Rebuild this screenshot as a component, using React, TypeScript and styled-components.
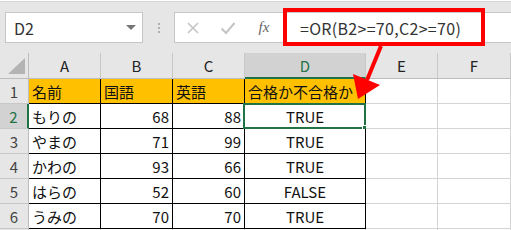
import React from 'react';
import styled, { createGlobalStyle, css } from 'styled-components';

const GlobalStyle = createGlobalStyle`
    body {
        margin: 0;
        background: #ffffff;
        font-family: 'Noto Sans CJK JP', 'Noto Sans', sans-serif;
    }
`;

const SPage = styled.div`
    position: relative;
    width: 511px;
    height: 230px;
    overflow: hidden;
    background: #ffffff;
`;

const SToolbar = styled.div`
    height: 52px;
    box-sizing: border-box;
    border-top: 1px solid #d4d4d4;
    margin-top: 1px;
    background: #e6e6e6;
    display: flex;
    align-items: flex-start;
    padding-top: 10px;
    padding-left: 5px;
`;

const SNameBox = styled.div`
    width: 138px;
    height: 31px;
    box-sizing: border-box;
    border: 1px solid #c6c6c6;
    background: #ffffff;
    display: flex;
    align-items: center;
    justify-content: space-between;
    padding: 0 6px 0 8px;
    font-size: 16px;
    color: #333333;
`;

const SDropArrow = styled.span`
    width: 0;
    height: 0;
    border-left: 5px solid transparent;
    border-right: 5px solid transparent;
    border-top: 5px solid #777777;
`;

const SDots = styled.div`
    width: 31px;
    height: 31px;
    display: flex;
    flex-direction: column;
    align-items: center;
    justify-content: center;
    gap: 2px;

    > span {
        width: 2px;
        height: 2px;
        background: #b0b0b0;
    }
`;

const SFormulaBox = styled.div`
    flex: 1;
    height: 31px;
    box-sizing: border-box;
    border: 1px solid #c6c6c6;
    border-right: none;
    background: #ffffff;
    display: flex;
    align-items: center;
`;

const SIconButton = styled.div`
    width: 35px;
    height: 29px;
    display: flex;
    align-items: center;
    justify-content: center;
`;

const SFx = styled.span`
    width: 38px;
    text-align: center;
    font-family: 'Liberation Serif', serif;
    font-style: italic;
    font-size: 15px;
    color: #666666;
`;

const SFormulaText = styled.span`
    margin-left: 17px;
    font-size: 16px;
    color: #333333;
    letter-spacing: 0.3px;
`;

const SGrid = styled.div`
    display: grid;
    grid-template-columns: 29px 72px 72px 72px 121px 72px 1fr;
    grid-template-rows: 26px repeat(7, 25px);
`;

const SCorner = styled.div`
    position: relative;
    background: #e6e6e6;
    border-right: 1px solid #bdbdbd;
    border-bottom: 1px solid #bdbdbd;

    &::after {
        content: '';
        position: absolute;
        right: 3px;
        bottom: 4px;
        width: 0;
        height: 0;
        border-left: 17px solid transparent;
        border-bottom: 16px solid #b4b4b4;
    }
`;

const SColHead = styled.div<{ $active?: boolean }>`
    background: #e6e6e6;
    border-right: 1px solid #c8c8c8;
    border-bottom: 1px solid #bdbdbd;
    box-sizing: border-box;
    display: flex;
    align-items: center;
    justify-content: center;
    font-size: 15px;
    color: #222222;
    ${({ $active }) =>
        $active &&
        css`
            background: #d2d2d2;
            color: #217346;
            border-bottom: 2px solid #217346;
        `}
`;

const SRowHead = styled.div<{ $active?: boolean }>`
    background: #e6e6e6;
    border-right: 1px solid #bdbdbd;
    border-bottom: 1px solid #c8c8c8;
    box-sizing: border-box;
    display: flex;
    align-items: center;
    justify-content: center;
    font-size: 15px;
    color: #444444;
    ${({ $active }) =>
        $active &&
        css`
            background: #d2d2d2;
            color: #217346;
            border-right: 2px solid #217346;
        `}
`;

const SCell = styled.div<{
    $align?: 'left' | 'right' | 'center';
    $head?: boolean;
    $boxed?: boolean;
    $selected?: boolean;
}>`
    position: relative;
    box-sizing: border-box;
    border-right: 1px solid #d4d4d4;
    border-bottom: 1px solid #d4d4d4;
    display: flex;
    align-items: center;
    padding: 0 3px;
    font-size: 15px;
    color: #111111;
    white-space: nowrap;
    justify-content: ${({ $align }) =>
        $align === 'right' ? 'flex-end' : $align === 'center' ? 'center' : 'flex-start'};
    background: ${({ $head }) => ($head ? '#ffc000' : '#ffffff')};
    ${({ $boxed }) =>
        $boxed &&
        css`
            border-right-color: #000000;
            border-bottom-color: #000000;
        `}
    ${({ $selected }) =>
        $selected &&
        css`
            &::before {
                content: '';
                position: absolute;
                left: -2px;
                top: -1px;
                right: -1px;
                bottom: -1px;
                border: 2px solid #217346;
                pointer-events: none;
            }
            &::after {
                content: '';
                position: absolute;
                right: -4px;
                bottom: -4px;
                width: 5px;
                height: 5px;
                background: #217346;
                border: 1px solid #ffffff;
            }
        `}
`;

const SHighlight = styled.div`
    position: absolute;
    left: 283px;
    top: 8px;
    width: 202px;
    height: 38px;
    box-sizing: border-box;
    border: 4px solid #ff0000;
    pointer-events: none;
`;

const SArrow = styled.svg`
    position: absolute;
    left: 0;
    top: 0;
    pointer-events: none;
`;

const columns = ['A', 'B', 'C', 'D', 'E', 'F'];

const rows: [string, string, string, string][] = [
    ['もりの', '68', '88', 'TRUE'],
    ['やまの', '71', '99', 'TRUE'],
    ['かわの', '93', '66', 'TRUE'],
    ['はらの', '52', '60', 'FALSE'],
    ['うみの', '70', '70', 'TRUE'],
];

const headers = ['名前', '国語', '英語', '合格か不合格か'];

export default function App() {
    return (
        <>
            <GlobalStyle />
            <SPage>
                <SToolbar>
                    <SNameBox>
                        D2
                        <SDropArrow />
                    </SNameBox>
                    <SDots>
                        <span />
                        <span />
                        <span />
                    </SDots>
                    <SFormulaBox>
                        <SIconButton>
                            <svg width="14" height="14" viewBox="0 0 14 14">
                                <path d="M2 2 L12 12 M12 2 L2 12" stroke="#c4c4c4" strokeWidth="1.6" />
                            </svg>
                        </SIconButton>
                        <SIconButton>
                            <svg width="16" height="14" viewBox="0 0 16 14">
                                <path d="M1.5 7.5 L6 12 L14.5 2" stroke="#c4c4c4" strokeWidth="2" fill="none" />
                            </svg>
                        </SIconButton>
                        <SFx>fx</SFx>
                        <SFormulaText>=OR(B2&gt;=70,C2&gt;=70)</SFormulaText>
                    </SFormulaBox>
                </SToolbar>
                <SGrid>
                    <SCorner />
                    {columns.map((c) => (
                        <SColHead key={c} $active={c === 'D'}>
                            {c}
                        </SColHead>
                    ))}
                    <SRowHead>1</SRowHead>
                    {headers.map((h) => (
                        <SCell key={h} $head $boxed>
                            {h}
                        </SCell>
                    ))}
                    <SCell />
                    <SCell />
                    {rows.map((r, i) => (
                        <React.Fragment key={r[0]}>
                            <SRowHead $active={i === 0}>{i + 2}</SRowHead>
                            <SCell $boxed>{r[0]}</SCell>
                            <SCell $boxed $align="right">
                                {r[1]}
                            </SCell>
                            <SCell $boxed $align="right">
                                {r[2]}
                            </SCell>
                            <SCell $boxed $align="center" $selected={i === 0}>
                                {r[3]}
                            </SCell>
                            <SCell />
                            <SCell />
                        </React.Fragment>
                    ))}
                    <SRowHead />
                    {[0, 1, 2, 3, 4, 5].map((k) => (
                        <SCell key={k} />
                    ))}
                </SGrid>
                <SHighlight />
                <SArrow width="511" height="230" viewBox="0 0 511 230">
                    <line x1="381" y1="46" x2="367" y2="80" stroke="#ff0000" strokeWidth="4" />
                    <polygon points="353,74 380,85 358,99" fill="#ff0000" />
                </SArrow>
            </SPage>
        </>
    );
}
